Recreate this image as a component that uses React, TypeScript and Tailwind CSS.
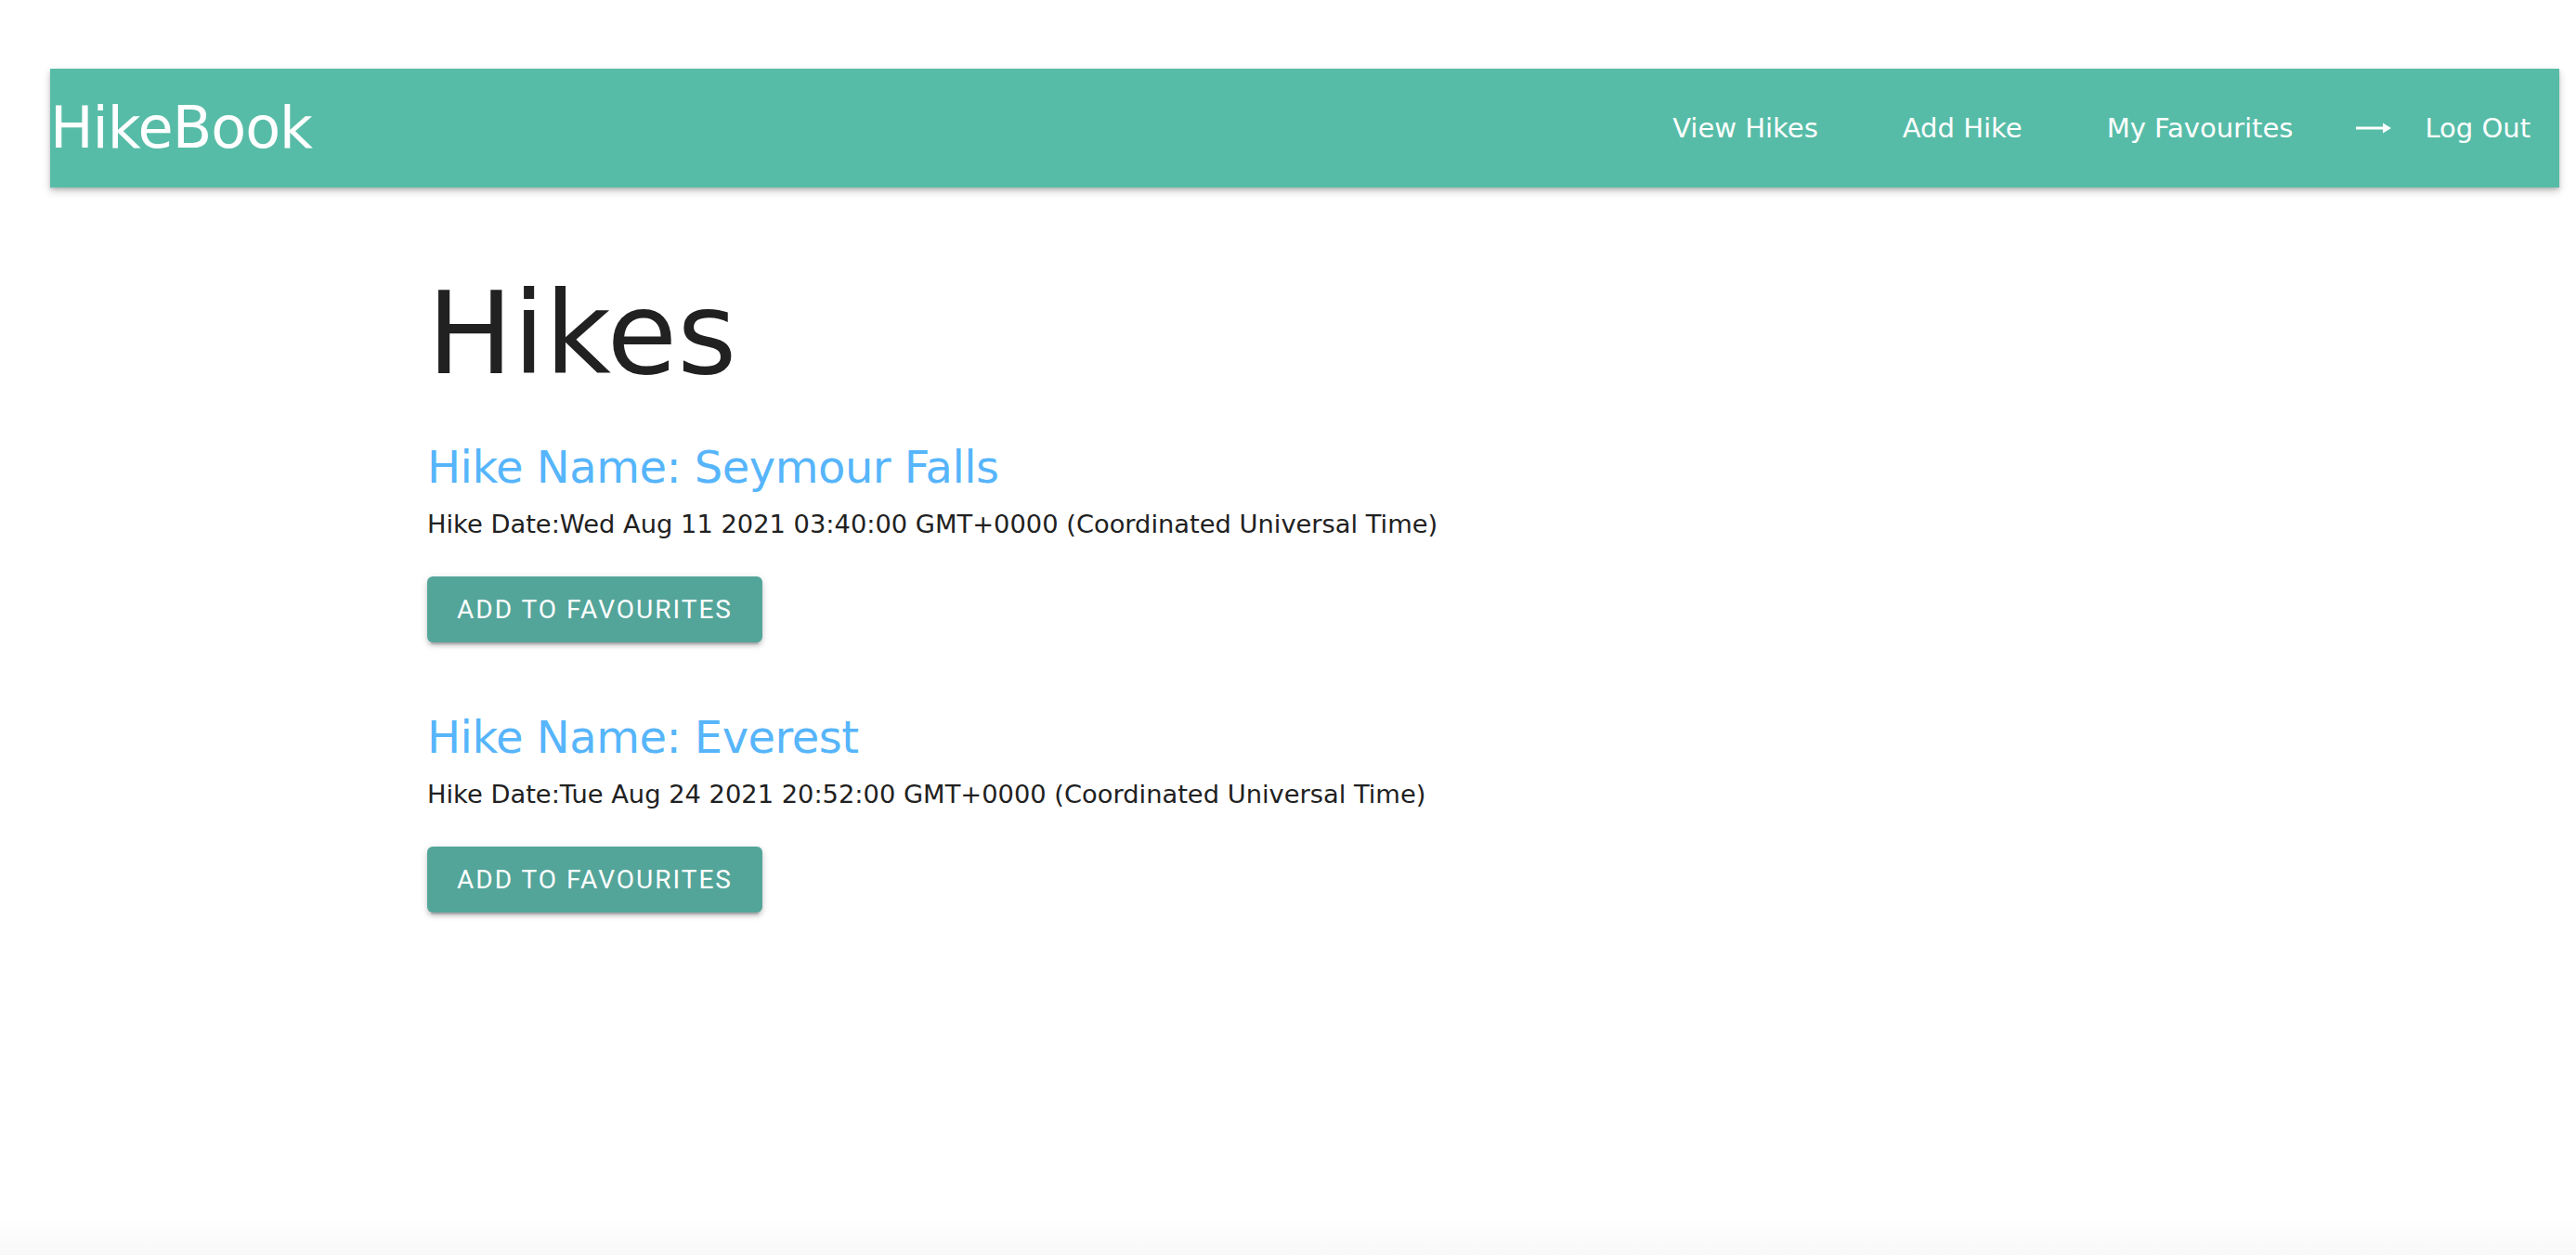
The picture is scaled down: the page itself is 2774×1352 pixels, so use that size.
import React from 'react';

type Hike = { name: string; date: string };

const hikes: Hike[] = [
  { name: 'Seymour Falls', date: 'Wed Aug 11 2021 03:40:00 GMT+0000 (Coordinated Universal Time)' },
  { name: 'Everest', date: 'Tue Aug 24 2021 20:52:00 GMT+0000 (Coordinated Universal Time)' },
];

const sans = "font-['DejaVu_Sans','Verdana',sans-serif]";

const LogoutArrow: React.FC = () => (
  <svg width="38" height="14" viewBox="0 0 38 14" className="shrink-0">
    <path d="M0 7 H31" stroke="white" strokeWidth="3" />
    <path d="M29 1.5 L38 7 L29 12.5 Z" fill="white" />
  </svg>
);

const NavBar: React.FC = () => (
  <header className="mt-[74px] ml-[54px] mr-[18px] h-[128px] bg-[#57bca7] shadow-[0_4px_8px_rgba(0,0,0,0.22),0_2px_3px_rgba(0,0,0,0.12)] flex items-center text-white">
    <h1 className={`${sans} text-[62px] leading-none tracking-[-1px] font-normal`}>HikeBook</h1>
    <nav className={`${sans} ml-auto pr-[31px] flex items-center text-[29px] leading-none`}>
      <a className="cursor-pointer">View Hikes</a>
      <a className="ml-[91px] cursor-pointer">Add Hike</a>
      <a className="ml-[91px] cursor-pointer">My Favourites</a>
      <span className="ml-[68px] flex items-center">
        <LogoutArrow />
      </span>
      <a className="ml-[36px] cursor-pointer">Log Out</a>
    </nav>
  </header>
);

const HikeItem: React.FC<{ hike: Hike; first: boolean }> = ({ hike, first }) => (
  <div className={first ? 'mt-[43px]' : 'mt-[74px]'}>
    <h3 className={`${sans} text-[48px] leading-[56px] tracking-[-0.5px] text-[#56b5fb]`}>
      Hike Name: {hike.name}
    </h3>
    <p className={`${sans} mt-[18px] text-[27.3px] leading-[32px] text-[#212121]`}>Hike Date:{hike.date}</p>
    <button className="mt-[40px] h-[71px] px-[32px] rounded-[6px] bg-[#53a59a] text-white font-['Roboto',sans-serif] font-normal text-[28px] tracking-[2px] uppercase shadow-[0_6px_2px_-4px_rgba(0,0,0,0.2),0_4px_4px_rgba(0,0,0,0.14),0_2px_10px_rgba(0,0,0,0.12)]">
      Add to Favourites
    </button>
  </div>
);

export default function App() {
  return (
    <div className="h-[1352px] bg-white flex flex-col overflow-hidden">
      <NavBar />
      <main className="pl-[460px] mt-[86px]">
        <h2 className={`${sans} text-[123px] leading-[144px] text-[#212121]`}>Hikes</h2>
        {hikes.map((h, i) => (
          <HikeItem key={h.name} hike={h} first={i === 0} />
        ))}
      </main>
      <div className="flex-1" />
      <div className="h-[40px] bg-gradient-to-b from-white to-[#f8f8f8]" />
    </div>
  );
}
